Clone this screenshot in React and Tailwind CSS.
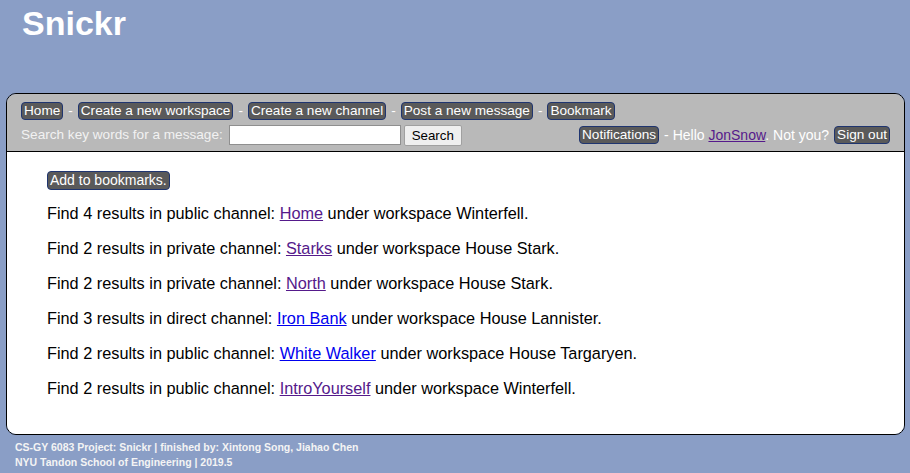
const results = [
  { n: 4, kind: "public", name: "Home", visited: true, ws: "Winterfell" },
  { n: 2, kind: "private", name: "Starks", visited: true, ws: "House Stark" },
  { n: 2, kind: "private", name: "North", visited: true, ws: "House Stark" },
  { n: 3, kind: "direct", name: "Iron Bank", visited: false, ws: "House Lannister" },
  { n: 2, kind: "public", name: "White Walker", visited: false, ws: "House Targaryen" },
  { n: 2, kind: "public", name: "IntroYourself", visited: true, ws: "Winterfell" },
];

function Btn({ children, className = "" }) {
  return (
    <span
      className={`inline-block rounded-[4px] border border-[#1f3570] bg-[#5a5a5a] px-[2px] leading-[16px] text-white ${className}`}
    >
      {children}
    </span>
  );
}

export default function App() {
  return (
    <div className="min-h-[473px] bg-[#8a9ec6] font-['Liberation_Sans',Arial,sans-serif]">
      <header className="h-[93px] pl-[22px]">
        <h1 className="pt-[4px] text-[34px] font-bold leading-[38px] text-white">Snickr</h1>
      </header>

      <div className="ml-[6px] mr-[5px] overflow-hidden rounded-[10px] border border-black">
        <nav className="flex flex-col bg-[#b9b9b9] px-[14px] pt-[7px] pb-[4px] text-[13.6px] text-white">
          <div className="flex h-[20px] items-center gap-[5px]">
            <Btn>Home</Btn>-
            <Btn>Create a new workspace</Btn>-
            <Btn>Create a new channel</Btn>-
            <Btn>Post a new message</Btn>-
            <Btn>Bookmark</Btn>
          </div>
          <div className="mt-[2px] flex h-[24px] items-center">
            <span className="text-[#f2f2f2]">Search key words for a message:</span>
            <input
              className="ml-[6px] h-[20px] w-[172px] border border-[#8f8f8f] bg-white"
              type="text"
            />
            <button className="ml-[3px] h-[21px] w-[58px] rounded-[2px] border border-[#a0a0a0] bg-[#efefef] text-[13.3px] text-black">
              Search
            </button>
            <div className="ml-auto flex items-center gap-[5px] text-[14px]">
              <Btn className="text-[13.6px]">Notifications</Btn>
              <span>
                - Hello <a className="text-[#551a8b] underline">JonSnow</a>. Not you?
              </span>
              <Btn className="text-[13.6px]">Sign out</Btn>
            </div>
          </div>
        </nav>

        <main className="h-[283px] border-t border-black bg-white pl-[40px] pt-[15px] text-[16.3px] text-black">
          <Btn className="text-[14px] leading-[17px]">Add to bookmarks.</Btn>
          <div className="mt-[13px] flex flex-col gap-[16px]">
            {results.map((r) => (
              <p key={r.name} className="leading-[19px]">
                Find {r.n} results in {r.kind} channel:{" "}
                <a className={`underline ${r.visited ? "text-[#551a8b]" : "text-[#0000ee]"}`}>{r.name}</a>{" "}
                under workspace {r.ws}.
              </p>
            ))}
          </div>
        </main>
      </div>

      <footer className="px-[15px] pt-[5px] text-[10.5px] font-bold leading-[15px] text-[#f4f4f4]">
        <div>CS-GY 6083 Project: Snickr | finished by: Xintong Song, Jiahao Chen</div>
        <div>NYU Tandon School of Engineering | 2019.5</div>
      </footer>
    </div>
  );
}
